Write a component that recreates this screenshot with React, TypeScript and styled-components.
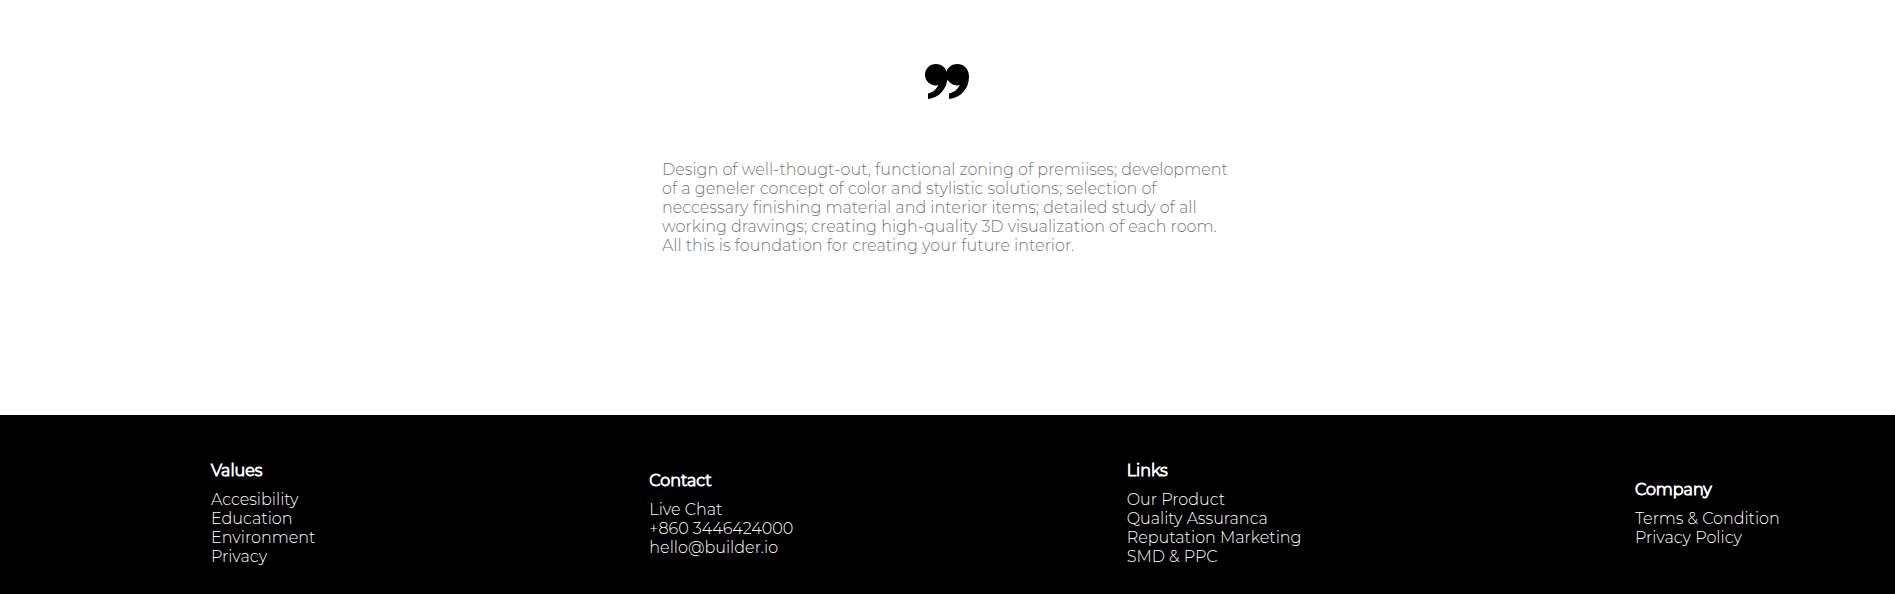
import React from "react";
import styled, { createGlobalStyle } from "styled-components";

const GlobalStyle = createGlobalStyle`
  * { box-sizing: border-box; }
  body {
    margin: 0;
    background: #fff;
    font-family: Montserrat, Inter, sans-serif;
    font-size: 16px;
    line-height: 19px;
  }
`;

const Testimonial = styled.section`
  display: flex;
  flex-direction: column;
  align-items: center;
  gap: 61px;
  padding: 64px 24px 160px;
`;

const QuoteMark = styled.svg`
  display: block;
  width: 45px;
  height: 35px;
`;

const Quote = styled.blockquote`
  width: 100%;
  max-width: 571px;
  margin: 0;
  color: #777;
  font-size: 16px;
  font-weight: 300;
`;

const Line = styled.span`
  display: block;
`;

const FooterBar = styled.footer`
  display: flex;
  flex-wrap: wrap;
  align-items: center;
  justify-content: space-between;
  gap: 32px;
  padding: 46px 115px 46px 211px;
  background: #000;
  color: #fff;
`;

const Column = styled.nav<{ $width: number }>`
  flex: 0 0 ${(p) => p.$width}px;
  white-space: nowrap;
`;

const Heading = styled.h2`
  margin: 0 0 10px;
  font-size: 16px;
  font-weight: 300;
  -webkit-text-stroke: 1px #fff;
`;

const List = styled.ul`
  margin: 0;
  padding: 0;
  list-style: none;
`;

const FooterLink = styled.a`
  color: inherit;
  font-weight: 300;
  text-decoration: none;
`;

const quoteLines = [
  "Design of well-thougt-out, functional zoning of premiises; development",
  "of a geneler concept of color and stylistic solutions; selection of",
  "neccessary finishing material and interior items; detailed study of all",
  "working drawings; creating high-quality 3D visualization of each room.",
  "All this is foundation for creating your future interior.",
];

const columns = [
  { title: "Values", width: 105, items: ["Accesibility", "Education", "Environment", "Privacy"] },
  { title: "Contact", width: 144, items: ["Live Chat", "+860 3446424000", "hello@builder.io"] },
  { title: "Links", width: 175, items: ["Our Product", "Quality Assuranca", "Reputation Marketing", "SMD & PPC"] },
  { title: "Company", width: 145, items: ["Terms & Condition", "Privacy Policy"] },
];

export default function App() {
  return (
    <>
      <GlobalStyle />
      <main>
        <Testimonial>
          <QuoteMark viewBox="0 0 45 35" aria-hidden="true">
            <path d="M10.700 0C17 0 22.500 4.500 22.500 12.500C22.500 25 14 34 3 35V29.500C8 28.500 11.500 25.500 13.200 21.100C12.400 21.300 11.500 21.400 10.700 21.400C4.800 21.400 0 16.600 0 10.700C0 4.800 4.800 0 10.700 0Z" />
            <path d="M32.200 0C38.500 0 44 4.500 44 12.500C44 25 35.500 34 24 35V29.500C29 28.500 33 25.500 34.700 21.100C33.900 21.300 33 21.400 32.200 21.400C28.500 21.400 25.500 19.700 23.500 17L21.500 15V8C22.500 3.500 27 0 32.200 0Z" />
          </QuoteMark>
          <Quote>
            {quoteLines.map((line) => (
              <Line key={line}>{line} </Line>
            ))}
          </Quote>
        </Testimonial>
      </main>
      <FooterBar>
        {columns.map((column) => (
          <Column key={column.title} $width={column.width} aria-label={column.title}>
            <Heading>{column.title}</Heading>
            <List>
              {column.items.map((item) => (
                <li key={item}>
                  <FooterLink href="#">{item}</FooterLink>
                </li>
              ))}
            </List>
          </Column>
        ))}
      </FooterBar>
    </>
  );
}
